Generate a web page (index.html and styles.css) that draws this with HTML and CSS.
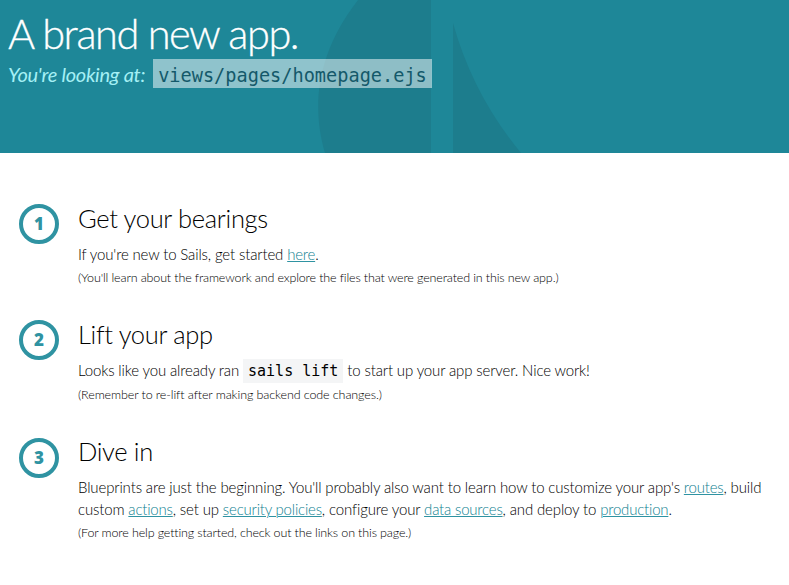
FILE: index.html
```html
<!DOCTYPE html>
<html lang="en">
<head>
<meta charset="utf-8">
<title>New Sails App</title>
<link rel="stylesheet" href="styles.css">
</head>
<body>
<header class="header">
  <svg class="sails" viewBox="0 0 789 153" width="789" height="153" aria-hidden="true"><path d="M358 0H431V153H325C313 112 313 58 358 0ZM453 23V153H521Q473 95 453 23Z"/></svg>
  <h1 class="title">A brand new app.</h1>
  <p class="looking"><em>You're looking at:</em> <code class="file">views/pages/homepage.ejs</code></p>
</header>
<main class="steps">
  <section class="step">
    <div class="badge">1</div>
    <div class="body">
      <h2>Get your bearings</h2>
      <p class="text">If you're new to Sails, get started <a href="#">here</a>.</p>
      <p class="note">(You'll learn about the framework and explore the files that were generated in this new app.)</p>
    </div>
  </section>
  <section class="step step-lift">
    <div class="badge">2</div>
    <div class="body">
      <h2>Lift your app</h2>
      <p class="text">Looks like you already ran <code class="cmd">sails lift</code> to start up your app server. Nice work!</p>
      <p class="note">(Remember to re-lift after making backend code changes.)</p>
    </div>
  </section>
  <section class="step step-dive">
    <div class="badge">3</div>
    <div class="body">
      <h2>Dive in</h2>
      <p class="text">Blueprints are just the beginning. You'll probably also want to learn how to customize your app's <a href="#">routes</a>, build<br>custom <a href="#">actions</a>, set up <a href="#">security policies</a>, configure your <a href="#">data sources</a>, and deploy to <a href="#">production</a>.</p>
      <p class="note">(For more help getting started, check out the links on this page.)</p>
    </div>
  </section>
</main>
</body>
</html>
```

FILE: styles.css
```css
* { box-sizing: border-box; }
body { margin: 0; height: 585px; overflow: hidden; background: #fff; color: #000; font-family: Lato, sans-serif; font-weight: 300; }
h1, h2, p { margin: 0; font-weight: 300; }
.header { position: relative; height: 153px; padding: 8px 8px 0; background: #1e8798; color: #fff; }
.sails { position: absolute; left: 0; top: 0; fill: #1d7d8d; }
.title { position: relative; font-size: 41.5px; line-height: 50px; letter-spacing: -1.45px; white-space: nowrap; -webkit-text-stroke: 0.3px #fff; }
.looking { position: relative; display: flex; align-items: center; gap: 8px; height: 31px; white-space: nowrap; }
.looking em { color: #a5f0f5; font-size: 20px; font-weight: 400; letter-spacing: -0.26px; padding-top: 1px; }
.file { padding: 0 5px; height: 29px; background: rgba(255, 255, 255, 0.5); color: #14596a; font: 18.6px/33px "DejaVu Sans Mono", monospace; }
.steps { padding: 51px 0 0 19px; }
.step { display: flex; gap: 19px; height: 116px; }
.step-lift { height: 118px; }
.badge { display: flex; align-items: center; justify-content: center; width: 40px; height: 40px; padding-bottom: 2px; border: 4px solid #2f93a2; border-radius: 50%; color: #2f93a2; font: 800 17px "Open Sans", sans-serif; }
.body { margin-top: -1px; white-space: nowrap; }
.step-dive .body { margin-top: -2px; }
h2 { font-size: 25.5px; line-height: 30px; letter-spacing: -0.32px; }
.text { margin-top: 10px; font-size: 15px; line-height: 22px; letter-spacing: -0.14px; }
.note { padding-top: 1px; font-size: 12.5px; line-height: 23px; letter-spacing: -0.14px; }
.step-lift .note { padding-top: 2px; letter-spacing: -0.1px; }
a { color: #0f7f91; letter-spacing: -0.2px; text-decoration-thickness: 1px; text-decoration-color: #2f93a2; }
.cmd { padding: 3px 5px; background: #f4f5f6; font: 15px/20px "DejaVu Sans Mono", monospace; letter-spacing: 0; }
```
